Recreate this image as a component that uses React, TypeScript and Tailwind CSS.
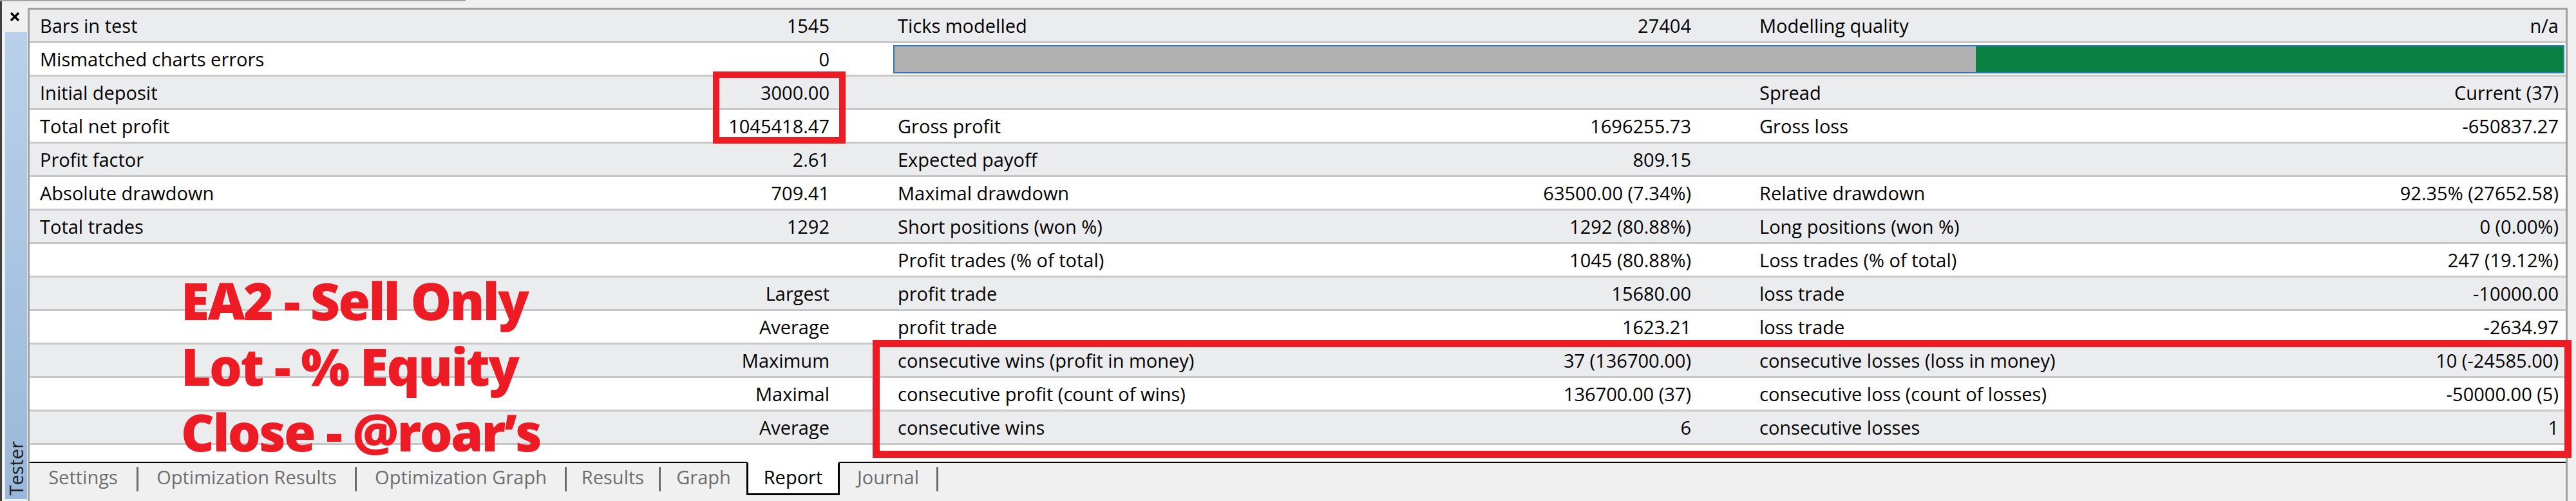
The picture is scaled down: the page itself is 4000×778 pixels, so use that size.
import React from 'react'

type Pair = [string, string]

interface ReportRow {
  a: Pair
  b?: Pair
  c?: Pair
  quality?: number
}

const rows: ReportRow[] = [
  { a: ['Bars in test', '1545'], b: ['Ticks modelled', '27404'], c: ['Modelling quality', 'n/a'] },
  { a: ['Mismatched charts errors', '0'], quality: 64.8 },
  { a: ['Initial deposit', '3000.00'], b: ['', ''], c: ['Spread', 'Current (37)'] },
  { a: ['Total net profit', '1045418.47'], b: ['Gross profit', '1696255.73'], c: ['Gross loss', '-650837.27'] },
  { a: ['Profit factor', '2.61'], b: ['Expected payoff', '809.15'], c: ['', ''] },
  { a: ['Absolute drawdown', '709.41'], b: ['Maximal drawdown', '63500.00 (7.34%)'], c: ['Relative drawdown', '92.35% (27652.58)'] },
  { a: ['Total trades', '1292'], b: ['Short positions (won %)', '1292 (80.88%)'], c: ['Long positions (won %)', '0 (0.00%)'] },
  { a: ['', ''], b: ['Profit trades (% of total)', '1045 (80.88%)'], c: ['Loss trades (% of total)', '247 (19.12%)'] },
  { a: ['', 'Largest'], b: ['profit trade', '15680.00'], c: ['loss trade', '-10000.00'] },
  { a: ['', 'Average'], b: ['profit trade', '1623.21'], c: ['loss trade', '-2634.97'] },
  { a: ['', 'Maximum'], b: ['consecutive wins (profit in money)', '37 (136700.00)'], c: ['consecutive losses (loss in money)', '10 (-24585.00)'] },
  { a: ['', 'Maximal'], b: ['consecutive profit (count of wins)', '136700.00 (37)'], c: ['consecutive loss (count of losses)', '-50000.00 (5)'] },
  { a: ['', 'Average'], b: ['consecutive wins', '6'], c: ['consecutive losses', '1'] },
]

function Cell({ pair, last }: { pair?: Pair; last?: boolean }) {
  return (
    <div className={`flex items-center pl-4 ${last ? 'pr-[11px]' : 'pr-[90px]'}`}>
      <span>{pair?.[0]}</span>
      <span className="ml-auto">{pair?.[1]}</span>
    </div>
  )
}

function QualityBar({ value }: { value: number }) {
  return (
    <div className="col-span-2 flex items-center pl-[9px] pr-[2px]">
      <div className="flex h-[44px] w-full border-2 border-[#2d78c2]">
        <div className="h-full bg-[#b1b1b1]" style={{ width: `${value}%` }} />
        <div className="h-full flex-1 bg-[#0b8043]" />
      </div>
    </div>
  )
}

const tabs = [
  { name: 'Settings', w: 'w-[166px]' },
  { name: 'Optimization Results', w: 'w-[336px]' },
  { name: 'Optimization Graph', w: 'w-[323px]' },
  { name: 'Results', w: 'w-[143px]' },
  { name: 'Graph', w: 'w-[133px]' },
  { name: 'Report', w: 'w-[145px]', active: true },
  { name: 'Journal', w: 'w-[150px]' },
]

function TabBar() {
  return (
    <div className="flex h-[56px] shrink-0 border-t-2 border-black bg-[#f0f0f0]">
      {tabs.map((t, i) => {
        if (t.active) {
          return (
            <div
              key={t.name}
              className={`${t.w} -mt-[2px] flex h-[52px] justify-center border-x-[3px] border-b-[3px] border-t-2 border-black border-t-white bg-white pt-[2px] text-black`}
            >
              {t.name}
            </div>
          )
        }
        const next = tabs[i + 1]
        return (
          <React.Fragment key={t.name}>
            <div className={`${t.w} flex justify-center pt-[2px] text-[#6e6e6e]`}>{t.name}</div>
            {(!next || !next.active) && <div className="mt-[6px] h-[38px] w-[3px] bg-[#6b6b6b]" />}
          </React.Fragment>
        )
      })}
    </div>
  )
}

export default function App() {
  return (
    <div className="relative flex h-[778px] w-[4000px] flex-col overflow-hidden bg-[#f0f0f0] font-['Open_Sans',sans-serif] text-[29px] leading-[40px] text-black">
      <div className="h-[2px] w-[723px] shrink-0 bg-[#a3a3a3]" />

      <div className="flex flex-1">
        {/* side dock with close button and vertical caption */}
        <div className="flex w-[43px] shrink-0 flex-col border-l-[3px] border-[#404040]">
          <div className="h-[48px] shrink-0 pl-[12px] pt-[17px]">
            <svg width="16" height="14" viewBox="0 0 16 14">
              <path d="M2 1 L14 13 M14 1 L2 13" stroke="#000" strokeWidth="3.4" />
            </svg>
          </div>
          <div className="mb-[3px] ml-[5px] flex w-[34px] flex-1 flex-col items-start justify-end bg-gradient-to-b from-[#b9d1ea] to-[#9ab8da] pb-[5px]">
            <span className="rotate-180 leading-[34px] text-[#1e1e1e] [writing-mode:vertical-rl]">Tester</span>
          </div>
        </div>

        {/* report panel */}
        <div className="mr-[13px] mt-[10px] flex flex-1 flex-col border-l-[3px] border-r-[3px] border-t-[3px] border-[#a0a0a0]">
          <div className="flex flex-col">
            {rows.map((r, i) => (
              <div
                key={i}
                className={`grid h-[52px] grid-cols-[1332px_1338px_1fr] border-b-[3px] border-[#c8c8c8] ${
                  i % 2 === 0 ? 'bg-[#ebecee]' : 'bg-white'
                }`}
              >
                <Cell pair={r.a} />
                {r.quality !== undefined ? (
                  <QualityBar value={r.quality} />
                ) : (
                  <>
                    <Cell pair={r.b} />
                    <Cell pair={r.c} last />
                  </>
                )}
              </div>
            ))}
          </div>
          <div className="flex-1 bg-white" />
          <TabBar />
          <div className="h-[5px] shrink-0" />
        </div>
      </div>

      {/* markup drawn over the report */}
      <div className="absolute left-[1107px] top-[111px] h-[112px] w-[206px] border-[10px] border-[#ed1c24]" />
      <div className="absolute left-[1355px] top-[528px] h-[183px] w-[2638px] border-[11px] border-[#ed1c24]" />
      <div className="absolute left-[281px] top-[415px] text-[80px] font-extrabold leading-[102px] tracking-[-2.5px] text-[#ed1c24]">
        <div>EA2 - Sell Only</div>
        <div>Lot - % Equity</div>
        <div>Close - @roar’s</div>
      </div>
    </div>
  )
}
